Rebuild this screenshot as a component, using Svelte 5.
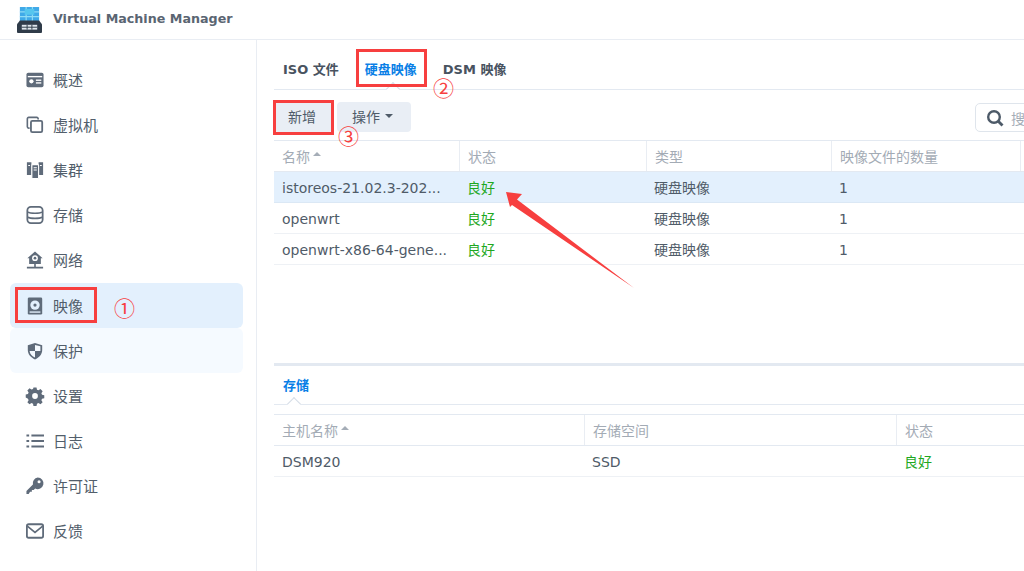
<script lang="ts">
    const NAV = [
        { id: 'overview', label: '概述' },
        { id: 'vm', label: '虚拟机' },
        { id: 'cluster', label: '集群' },
        { id: 'storage', label: '存储' },
        { id: 'network', label: '网络' },
        { id: 'image', label: '映像', active: true },
        { id: 'protect', label: '保护', hover: true },
        { id: 'settings', label: '设置' },
        { id: 'log', label: '日志' },
        { id: 'license', label: '许可证' },
        { id: 'feedback', label: '反馈' },
    ]

    const IMAGES = [
        { name: 'istoreos-21.02.3-202...', selected: true },
        { name: 'openwrt' },
        { name: 'openwrt-x86-64-gene...' },
    ]
</script>

{#snippet icon(id: string)}
    <svg class="ico" viewBox="0 0 20 20">
        {#if id === 'overview'}
            <rect x="0.5" y="2" width="19" height="16" rx="2" fill="#5f6b7a" />
            <rect x="2" y="5.5" width="16" height="1.5" fill="#fff" />
            <circle cx="6" cy="11.5" r="2.4" fill="#fff" />
            <rect x="11" y="9.5" width="6" height="1.5" fill="#fff" />
            <rect x="11" y="12.5" width="6" height="1.5" fill="#fff" />
        {:else if id === 'vm'}
            <path d="M13.5 4V3a1.5 1.5 0 0 0-1.5-1.5H3A1.5 1.5 0 0 0 1.500 3v9A1.500 1.500 0 0 0 3 13.500h1" fill="none" stroke="#5f6b7a" stroke-width="1.800" />
            <rect x="5.500" y="5.500" width="12.500" height="12.500" rx="1.500" fill="none" stroke="#5f6b7a" stroke-width="2" />
        {:else if id === 'cluster'}
            <path d="M1 1.500h5v14H1z M14 1.500h5v14h-5z" fill="#5f6b7a" />
            <rect x="6.500" y="4" width="7.500" height="15.500" rx="1" fill="#5f6b7a" stroke="#fff" stroke-width="1.200" />
            <path d="M8.500 7.500h3.500 M8.500 10h3.500" stroke="#fff" stroke-width="1.200" />
            <path d="M2.500 5h2 M15.500 5h2" stroke="#fff" stroke-width="1.200" />
        {:else if id === 'storage'}
            <rect x="1.500" y="1" width="17" height="18" rx="4" fill="none" stroke="#5f6b7a" stroke-width="2" />
            <path d="M2 6.800c3 1.700 13 1.700 16 0 M2 12.500c3 1.700 13 1.700 16 0" fill="none" stroke="#5f6b7a" stroke-width="1.800" />
        {:else if id === 'network'}
            <path d="M10 0.500 18.500 8H16.500v6.500H3.500V8H1.500z" fill="#5f6b7a" />
            <circle cx="10" cy="8" r="3.200" fill="#fff" />
            <circle cx="10" cy="8" r="1.500" fill="#5f6b7a" />
            <path d="M10 14v4 M1 18.500h18" stroke="#5f6b7a" stroke-width="1.800" />
        {:else if id === 'image'}
            <rect x="2" y="0.500" width="16" height="19" rx="1.500" fill="#5f6b7a" />
            <circle cx="10" cy="9" r="5.200" fill="#e3f0fd" />
            <circle cx="10" cy="9" r="1.800" fill="#5f6b7a" />
            <rect x="4" y="16" width="12" height="1.500" fill="#e3f0fd" />
        {:else if id === 'protect'}
            <path d="M10 1 18 3.500V9c0 5-3.500 8.500-8 10.500C5.500 17.500 2 14 2 9V3.500z" fill="#5f6b7a" />
            <path d="M10 3.200V10H4c.3 3.500 3 5.800 6 7.300V10h6V4.800z" fill="#f5faff" />
        {:else if id === 'settings'}
            <path d="M8.300 0.500h3.400l.5 2.500 1.700.7 2.200-1.400 2.400 2.400-1.400 2.200.7 1.700 2.500.5v3.400l-2.500.5-.7 1.700 1.400 2.200-2.400 2.400-2.200-1.400-1.700.7-.5 2.500H8.300l-.5-2.500-1.700-.7-2.200 1.400-2.400-2.400 1.400-2.200-.7-1.700L-.3 11.700V8.300l2.500-.5.7-1.700-1.400-2.200 2.400-2.400 2.200 1.400 1.700-.7z" fill="#5f6b7a" />
            <circle cx="10" cy="10" r="3.200" fill="#fff" />
        {:else if id === 'log'}
            <path d="M0.500 4h3 M6 4h14 M0.500 10h3 M6 10h14 M0.500 16h3 M6 16h14" stroke="#5f6b7a" stroke-width="2.200" />
        {:else if id === 'license'}
            <path d="M13 0.500a6.500 6.500 0 1 1-2.800 12.400L8.500 14.500H6.500v2H4.500l-1.500 2.500H0.500v-3.500l7.200-7.200A6.500 6.500 0 0 1 13 0.500z" fill="#5f6b7a" />
            <circle cx="14.500" cy="5.200" r="1.700" fill="#fff" />
        {:else if id === 'feedback'}
            <rect x="1" y="2.500" width="18" height="15" rx="2" fill="none" stroke="#5f6b7a" stroke-width="2" />
            <path d="M1.500 4.500 10 11.500l8.500-7" fill="none" stroke="#5f6b7a" stroke-width="1.800" />
        {/if}
    </svg>
{/snippet}

<div class="app">
    <header class="topbar">
        <svg class="logo" viewBox="0 0 26 27">
            <rect x="3" y="0" width="20" height="15" fill="#3fa9e8" />
            <path d="M9.500 0v15 M16 0v15 M3 5h20 M3 10h20" stroke="#8fdcf5" stroke-width="1.200" />
            <rect x="8" y="2" width="10" height="6" fill="#56c6ee" />
            <path d="M3 14h20l3 4v8a1 1 0 0 1-1 1H1a1 1 0 0 1-1-1v-8z" fill="#2f3b49" />
            <rect x="5" y="18.500" width="16" height="5" fill="#dfe6ec" />
            <path d="M10.500 18.500v5 M15.500 18.500v5 M5 21h16" stroke="#2f3b49" stroke-width="1" />
        </svg>
        <span class="title">Virtual Machine Manager</span>
    </header>

    <div class="body">
        <nav class="sidebar">
            {#each NAV as item}
                <div class="nav-item" class:active={item.active} class:hover={item.hover}>
                    {@render icon(item.id)}
                    <span>{item.label}</span>
                </div>
            {/each}
        </nav>

        <main class="content">
            <div class="tabs">
                <span class="tab">ISO 文件</span>
                <span class="tab current">硬盘映像</span>
                <span class="tab">DSM 映像</span>
                <i class="caret" style="left: 114px"></i>
            </div>

            <div class="toolbar">
                <button class="btn add">新增</button>
                <button class="btn more">操作 <b class="down"></b></button>
                <div class="search">
                    <svg viewBox="0 0 18 18" width="18" height="18">
                        <circle cx="8" cy="8" r="5.800" fill="none" stroke="#4d5a68" stroke-width="2.400" />
                        <path d="M12 12l4.500 4.500" stroke="#4d5a68" stroke-width="2.800" />
                    </svg>
                    <span>搜</span>
                </div>
            </div>

            <div class="grid top head">
                <div class="cell">名称 <b class="up"></b></div>
                <div class="cell">状态</div>
                <div class="cell">类型</div>
                <div class="cell">映像文件的数量</div>
                <div class="cell"></div>
            </div>
            {#each IMAGES as row}
                <div class="grid top row" class:selected={row.selected}>
                    <div class="cell lat">{row.name}</div>
                    <div class="cell ok">良好</div>
                    <div class="cell">硬盘映像</div>
                    <div class="cell lat">1</div>
                    <div class="cell"></div>
                </div>
            {/each}

            <div class="spacer"></div>

            <div class="detail">
                <div class="subtab"><span>存储</span><i class="caret" style="left: 15px"></i></div>
                <div class="grid bottom head">
                    <div class="cell">主机名称 <b class="up"></b></div>
                    <div class="cell">存储空间</div>
                    <div class="cell">状态</div>
                </div>
                <div class="grid bottom row">
                    <div class="cell lat">DSM920</div>
                    <div class="cell lat">SSD</div>
                    <div class="cell ok">良好</div>
                </div>
            </div>
        </main>
    </div>

    <!-- red markup drawn on top of the screenshot -->
    <div class="mark" style="left: 15px; top: 287px; width: 82px; height: 36px"></div>
    <div class="mark" style="left: 356px; top: 49px; width: 71px; height: 38px"></div>
    <div class="mark" style="left: 273px; top: 100px; width: 61px; height: 35px"></div>
    <span class="num" style="left: 114px; top: 295px">①</span>
    <span class="num" style="left: 433px; top: 75px">②</span>
    <span class="num" style="left: 338px; top: 123px">③</span>
    <svg class="arrow" viewBox="0 0 1024 571">
        <path d="M506 192 522 194 517 199.500 634 288 512 205 510 207z" fill="#f73f3f" />
    </svg>
</div>

<style>
    :global(body) {
        margin: 0;
        background: #fff;
        overflow: hidden;
    }
    .app {
        position: relative;
        width: 1024px;
        height: 571px;
        overflow: hidden;
        display: flex;
        flex-direction: column;
        font-family: "DejaVu Sans", "Noto Sans CJK SC", sans-serif;
        font-size: 13px;
        color: #4f5b68;
    }
    .topbar {
        height: 39px;
        flex: none;
        display: flex;
        align-items: center;
        gap: 11px;
        padding-left: 17px;
        border-bottom: 1px solid #e9edf3;
    }
    .logo { width: 25px; height: 26px; }
    .title {
        font-size: 12.700px;
        font-weight: 700;
        color: #5a6572;
        margin-top: -2px;
    }
    .body { flex: 1; display: flex; min-height: 0; }

    .sidebar {
        width: 233px;
        flex: none;
        padding: 17px 13px 0 10px;
        border-right: 1px solid #e9edf3;
    }
    .nav-item {
        height: 45.200px;
        display: flex;
        align-items: center;
        gap: 9px;
        padding-left: 16px;
        font-size: 15px;
        color: #525e6b;
    }
    .nav-item span { margin-top: -1px; }
    .nav-item.active { background: #e3f0fd; border-radius: 6px; }
    .nav-item.hover { background: #f5faff; border-radius: 6px; }
    .ico { width: 18px; height: 18px; flex: none; overflow: visible; }

    .content {
        flex: 1;
        min-width: 0;
        padding-left: 17px;
        display: flex;
        flex-direction: column;
    }
    .tabs {
        position: relative;
        height: 50px;
        flex: none;
        display: flex;
        align-items: center;
        gap: 26px;
        padding: 7px 0 0 9px;
        box-sizing: border-box;
        border-bottom: 1px solid #e3e9f1;
    }
    .tab { font-size: 13px; font-weight: 700; color: #49535f; }
    .tab.current { color: #0a7fe6; }
    .caret {
        position: absolute;
        bottom: 0;
        width: 9px;
        height: 9px;
        background: #fff;
        border-left: 1px solid #d5dde7;
        border-top: 1px solid #d5dde7;
        transform: translateY(50%) rotate(45deg);
    }
    .toolbar {
        height: 50px;
        flex: none;
        box-sizing: border-box;
        padding-top: 12px;
        display: flex;
        align-items: flex-start;
        gap: 4px;
    }
    .btn {
        height: 30px;
        padding: 0 17px 2px 14px;
        border: 0;
        border-radius: 4px;
        background: #e9eef5;
        color: #4f5b68;
        font: inherit;
        font-size: 14px;
        display: flex;
        align-items: center;
        gap: 5px;
    }
    .btn.more { padding: 0 18px 2px 15px; }
    .down {
        width: 0;
        height: 0;
        border: 4.500px solid transparent;
        border-top-color: #4f5b68;
        border-bottom: 0;
    }
    .up {
        display: inline-block;
        width: 0;
        height: 0;
        margin: 0 0 3px 3px;
        border: 4px solid transparent;
        border-bottom-color: #a5adb7;
        border-top: 0;
    }
    .search {
        margin-left: auto;
        margin-right: -50px;
        margin-top: 1px;
        width: 99px;
        height: 29px;
        box-sizing: border-box;
        border: 1px solid #dfe5ec;
        border-radius: 5px;
        display: flex;
        align-items: center;
        gap: 7px;
        padding-left: 10px;
        color: #a5adb7;
        font-size: 14px;
    }
    .grid { display: grid; flex: none; }
    .grid.top { grid-template-columns: 185px 187px 185px 189px 100px; }
    .grid.bottom { grid-template-columns: 310px 312px 240px; }
    .head {
        height: 32px;
        box-sizing: border-box;
        border-top: 1px solid #e3e9f1;
        border-bottom: 1px solid #e3e9f1;
        color: #a3abb5;
    }
    .row {
        height: 31px;
        box-sizing: border-box;
        border-bottom: 1px solid #eef1f5;
    }
    .row.selected { background: #e3f0fd; border-bottom-color: #dbe8f5; }
    .cell {
        display: flex;
        align-items: center;
        padding-left: 8px;
        padding-bottom: 1px;
        font-size: 14px;
        white-space: nowrap;
    }
    .cell.lat { padding-bottom: 0; padding-top: 1px; }
    .head .cell { border-left: 1px solid #e9edf3; }
    .head .cell:first-child { border-left: 0; }
    .ok { color: #1fa81f; }
    .spacer { flex: 1; }
    .detail {
        flex: none;
        height: 208px;
        box-sizing: border-box;
        border-top: 3px solid #e3e9f1;
    }
    .subtab {
        position: relative;
        height: 39px;
        box-sizing: border-box;
        padding: 9px 0 0 9px;
        border-bottom: 1px solid #e3e9f1;
        margin-bottom: 9px;
        font-size: 13px;
        font-weight: 700;
        color: #0a7fe6;
    }
    .mark {
        position: absolute;
        box-sizing: border-box;
        border: 3px solid #f73f3f;
    }
    .num {
        position: absolute;
        font-family: "Noto Sans CJK SC", sans-serif;
        font-size: 21px;
        line-height: 24px;
        color: #f73f3f;
    }
    .arrow {
        position: absolute;
        inset: 0;
        width: 1024px;
        height: 571px;
        pointer-events: none;
    }
</style>
